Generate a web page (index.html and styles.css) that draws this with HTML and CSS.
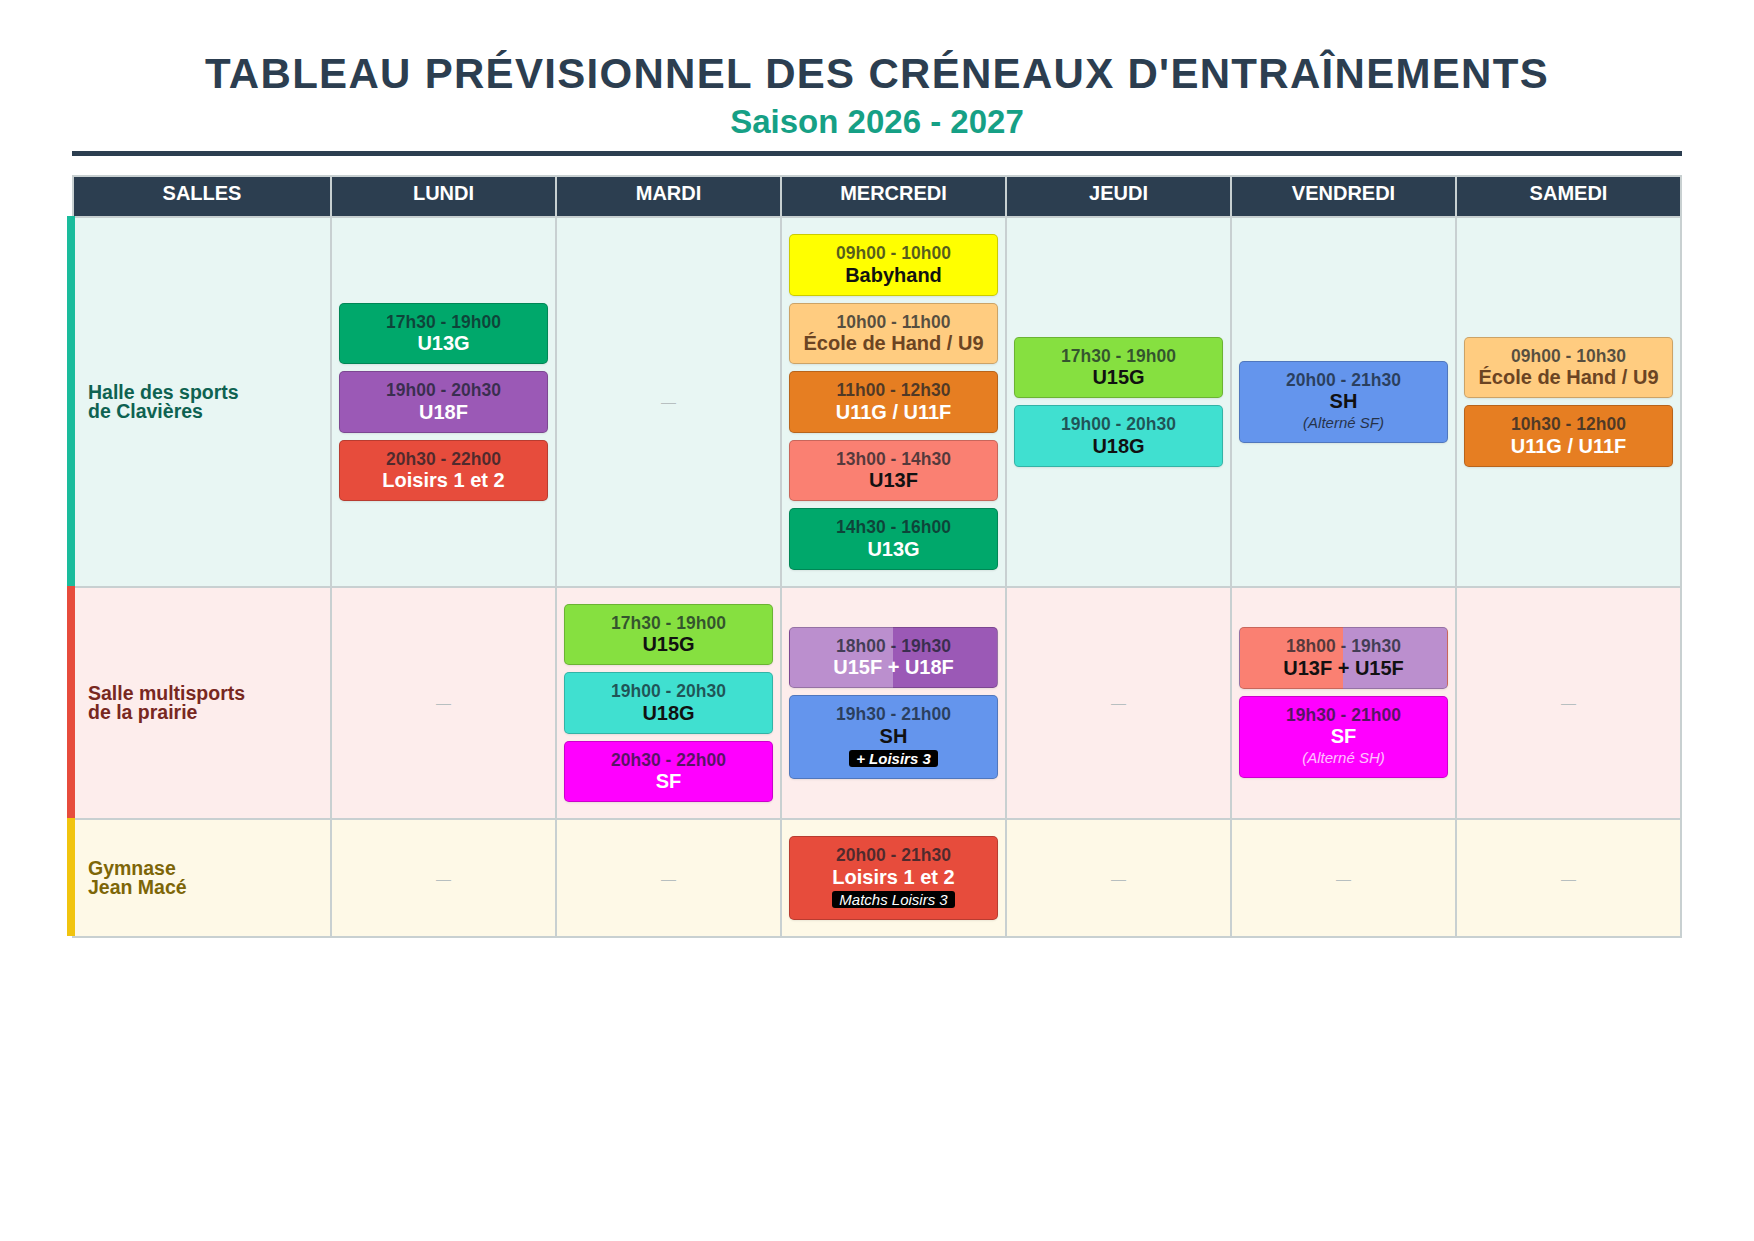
FILE: index.html
```html
<!DOCTYPE html>
<html lang="fr">
<head>
<meta charset="utf-8">
<title>Tableau prévisionnel des créneaux d'entraînements</title>
<link rel="stylesheet" href="styles.css">
</head>
<body>
<div class="page">
  <h1 class="title">TABLEAU PRÉVISIONNEL DES CRÉNEAUX D'ENTRAÎNEMENTS</h1>
  <div class="subtitle">Saison 2026 - 2027</div>
  <div class="rule"></div>

  <div class="schedule">
    <div class="th">SALLES</div>
    <div class="th">LUNDI</div>
    <div class="th">MARDI</div>
    <div class="th">MERCREDI</div>
    <div class="th">JEUDI</div>
    <div class="th">VENDREDI</div>
    <div class="th">SAMEDI</div>

    <!-- Halle des sports -->
    <div class="cell salle r1"><span>Halle des sports<br>de Clavières</span></div>
    <div class="cell r1">
      <div class="card c-green"><div class="time">17h30 - 19h00</div><div class="name">U13G</div></div>
      <div class="card c-purple"><div class="time">19h00 - 20h30</div><div class="name">U18F</div></div>
      <div class="card c-red"><div class="time">20h30 - 22h00</div><div class="name">Loisirs 1 et 2</div></div>
    </div>
    <div class="cell r1"><span class="dash">—</span></div>
    <div class="cell r1">
      <div class="card c-yellow"><div class="time">09h00 - 10h00</div><div class="name">Babyhand</div></div>
      <div class="card c-peach"><div class="time">10h00 - 11h00</div><div class="name">École de Hand / U9</div></div>
      <div class="card c-orange"><div class="time">11h00 - 12h30</div><div class="name">U11G / U11F</div></div>
      <div class="card c-salmon"><div class="time">13h00 - 14h30</div><div class="name">U13F</div></div>
      <div class="card c-green"><div class="time">14h30 - 16h00</div><div class="name">U13G</div></div>
    </div>
    <div class="cell r1">
      <div class="card c-lime"><div class="time">17h30 - 19h00</div><div class="name">U15G</div></div>
      <div class="card c-turq"><div class="time">19h00 - 20h30</div><div class="name">U18G</div></div>
    </div>
    <div class="cell r1">
      <div class="card c-blue"><div class="time">20h00 - 21h30</div><div class="name">SH</div><div class="note">(Alterné SF)</div></div>
    </div>
    <div class="cell r1">
      <div class="card c-peach"><div class="time">09h00 - 10h30</div><div class="name">École de Hand / U9</div></div>
      <div class="card c-orange"><div class="time">10h30 - 12h00</div><div class="name">U11G / U11F</div></div>
    </div>

    <!-- Salle multisports -->
    <div class="cell salle r2"><span>Salle multisports<br>de la prairie</span></div>
    <div class="cell r2"><span class="dash">—</span></div>
    <div class="cell r2">
      <div class="card c-lime"><div class="time">17h30 - 19h00</div><div class="name">U15G</div></div>
      <div class="card c-turq"><div class="time">19h00 - 20h30</div><div class="name">U18G</div></div>
      <div class="card c-magenta"><div class="time">20h30 - 22h00</div><div class="name">SF</div></div>
    </div>
    <div class="cell r2">
      <div class="card c-split-purple"><div class="time">18h00 - 19h30</div><div class="name">U15F + U18F</div></div>
      <div class="card c-blue"><div class="time">19h30 - 21h00</div><div class="name">SH</div><div class="badge-row"><span class="badge badge-bold">+ Loisirs 3</span></div></div>
    </div>
    <div class="cell r2"><span class="dash">—</span></div>
    <div class="cell r2">
      <div class="card c-split-salmon"><div class="time">18h00 - 19h30</div><div class="name">U13F + U15F</div></div>
      <div class="card c-magenta"><div class="time">19h30 - 21h00</div><div class="name">SF</div><div class="note">(Alterné SH)</div></div>
    </div>
    <div class="cell r2"><span class="dash">—</span></div>

    <!-- Gymnase -->
    <div class="cell salle r3"><span>Gymnase<br>Jean Macé</span></div>
    <div class="cell r3"><span class="dash">—</span></div>
    <div class="cell r3"><span class="dash">—</span></div>
    <div class="cell r3">
      <div class="card c-red"><div class="time">20h00 - 21h30</div><div class="name">Loisirs 1 et 2</div><div class="badge-row"><span class="badge">Matchs Loisirs 3</span></div></div>
    </div>
    <div class="cell r3"><span class="dash">—</span></div>
    <div class="cell r3"><span class="dash">—</span></div>
    <div class="cell r3"><span class="dash">—</span></div>
  </div>
</div>
</body>
</html>
```

FILE: styles.css
```css
html, body {
  margin: 0;
  padding: 0;
  background: #ffffff;
}

body {
  font-family: "Liberation Sans", Arial, Helvetica, sans-serif;
  color: #2c3e50;
}

.page {
  width: 1610px;
  margin: 0 auto;
  padding-top: 50px;
}

.title {
  margin: 0;
  font-size: 42px;
  line-height: 48px;
  font-weight: bold;
  letter-spacing: 1.3px;
  text-align: center;
  color: #2c3e50;
}

.subtitle {
  margin-top: 5px;
  font-size: 33px;
  line-height: 38px;
  font-weight: bold;
  text-align: center;
  color: #16a085;
}

.rule {
  margin-top: 10px;
  height: 5px;
  background: #2c3e50;
}

.schedule {
  margin-top: 19px;
  display: grid;
  grid-template-columns: 256px repeat(6, 1fr);
  gap: 2px;
  background: #c8d0d1;
  border: 2px solid #c8d0d1;
}

.th {
  background: #2c3e50;
  color: #ffffff;
  font-size: 20px;
  font-weight: bold;
  line-height: 32px;
  padding-bottom: 7px;
  text-align: center;
}

.cell {
  position: relative;
  padding: 16px 7px;
  display: flex;
  flex-direction: column;
  justify-content: center;
  gap: 7px;
}

.r1 { background: #e8f6f3; }
.r2 { background: #fdedec; }
.r3 { background: #fef9e7; }

.salle {
  padding-left: 14px;
  font-size: 19.5px;
  line-height: 19px;
  font-weight: bold;
}

.salle::before {
  content: "";
  position: absolute;
  left: -7px;
  top: -2px;
  bottom: 0;
  width: 8px;
}

.r1.salle { color: #0e6251; }
.r1.salle::before { background: #1abc9c; }
.r2.salle { color: #78281f; }
.r2.salle::before { background: #e74c3c; }
.r3.salle { color: #7d6608; }
.r3.salle::before { background: #f1c40f; }

.dash {
  align-self: center;
  color: #b7bfc0;
  font-size: 15px;
}

.card {
  border: 1px solid rgba(0, 0, 0, 0.2);
  border-radius: 5px;
  padding: 9px 6px;
  text-align: center;
  box-shadow: 0 1px 2px rgba(0, 0, 0, 0.08);
  color: #ffffff;
}

.time {
  font-size: 17.5px;
  line-height: 19.5px;
  font-weight: bold;
  color: rgba(20, 30, 40, 0.72);
}

.name {
  font-size: 20px;
  line-height: 22px;
  font-weight: bold;
}

.note {
  font-size: 15px;
  line-height: 21px;
  font-style: italic;
  opacity: 0.75;
}

.badge-row {
  margin-top: 3.5px;
  margin-bottom: 2px;
  height: 17px;
}

.badge {
  display: inline-block;
  background: #000000;
  color: #ffffff;
  font-size: 15px;
  line-height: 17px;
  font-style: italic;
  padding: 0 7px;
  border-radius: 3px;
}

.badge-bold { font-weight: bold; }

.c-green { background: #00a86b; }
.c-purple { background: #9b59b6; }
.c-red { background: #e74c3c; }
.c-yellow { background: #ffff00; color: #111111; }
.c-peach { background: #ffcc80; color: #6b4423; }
.c-orange { background: #e67e22; }
.c-salmon { background: #fa8072; color: #111111; }
.c-lime { background: #86e040; color: #111111; }
.c-turq { background: #40e0d0; color: #111111; }
.c-blue { background: #6495ed; color: #111111; }
.c-magenta { background: #ff00ff; }
.c-split-purple { background: linear-gradient(to right, #bb8fce 50%, #9b59b6 50%); }
.c-split-salmon { background: linear-gradient(to right, #fa8072 50%, #bb8fce 50%); color: #111111; }
```
